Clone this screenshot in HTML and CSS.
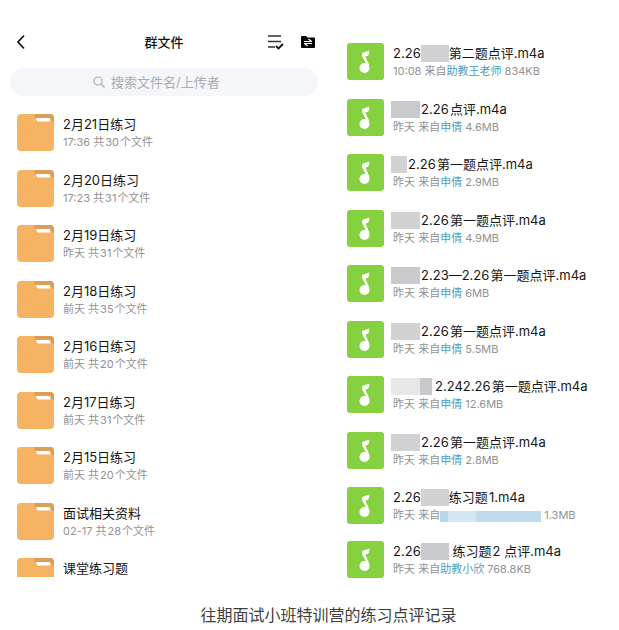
FILE: index.html
```html
<!DOCTYPE html>
<html lang="zh-CN">
<head>
    <meta charset="UTF-8">
    <meta name="viewport" content="width=device-width, initial-scale=1.0">
    <title>群文件</title>
    <link rel="stylesheet" href="styles.css">
</head>
<body>
    <svg class="symbols" aria-hidden="true">
        <symbol id="folder" viewBox="0 0 37 37">
            <rect width="37" height="37" rx="4" fill="#f6b363"/>
            <path d="M17 0H33a4 4 0 0 1 4 4V8L34 7H21Q19 6 18 4Z" fill="#dd9d55"/>
            <path d="M19 4H32Q33.500 4 33.500 5.500V7.500H21Q19.500 7.500 19 4Z" fill="#fff"/>
        </symbol>
        <symbol id="music" viewBox="0 0 37 37">
            <rect width="37" height="37" rx="3" fill="#86d140"/>
            <circle cx="17.500" cy="25" r="5" fill="#fff"/>
            <path d="M22.500 25C22.500 21 19.500 17 18.500 13.500C21 13 22.500 12.500 22.300 7.500C20 9 17 8.500 15.500 10C13.500 12.500 17.500 17 19.500 21.500Z" fill="#fff"/>
        </symbol>
    </svg>

    <main class="panels">
        <section class="panel">
            <header class="topbar">
                <button class="icon-btn" aria-label="返回">
                    <svg width="16" height="16" viewBox="0 0 16 16"><path d="M11 1.500L5 8l6 6.500" fill="none" stroke="#111" stroke-width="1.700"/></svg>
                </button>
                <h1>群文件</h1>
                <div class="actions">
                    <button class="icon-btn" aria-label="多选">
                        <svg width="17" height="16" viewBox="0 0 17 16"><path d="M1 2h13M1 7.500h13M1 13h7" fill="none" stroke="#333" stroke-width="1.500"/><path d="M9 12l2.500 2.500L16 10" fill="none" stroke="#111" stroke-width="1.800"/></svg>
                    </button>
                    <button class="icon-btn" aria-label="传输列表">
                        <svg width="14" height="16" viewBox="0 0 14 16"><path d="M0 3q0-1 1-1h4l1.500 1.500H13q1 0 1 1V13q0 1-1 1H1q-1 0-1-1Z" fill="#050505"/><path d="M3 7.500h8M7.500 5l3 2.500M3 9.500h8M3.500 9.500l3 2.500" fill="none" stroke="#fff" stroke-width="1.200"/></svg>
                    </button>
                </div>
            </header>
            <label class="search">
                <svg width="12" height="12" viewBox="0 0 12 12"><circle cx="5" cy="5" r="4" fill="none" stroke="#a9adb2" stroke-width="1.200"/><path d="M8 8l3.500 3.500" stroke="#a9adb2" stroke-width="1.200"/></svg>
                <input type="search" placeholder="搜索文件名/上传者" aria-label="搜索">
            </label>
            <ul class="list">
                <li><svg class="icon"><use href="#folder"/></svg><div><h2>2月21日练习</h2><p>17:36 共&hairsp;30&hairsp;个文件</p></div></li>
                <li><svg class="icon"><use href="#folder"/></svg><div><h2>2月20日练习</h2><p>17:23 共&hairsp;31&hairsp;个文件</p></div></li>
                <li><svg class="icon"><use href="#folder"/></svg><div><h2>2月19日练习</h2><p>昨天 共&hairsp;31&hairsp;个文件</p></div></li>
                <li><svg class="icon"><use href="#folder"/></svg><div><h2>2月18日练习</h2><p>前天 共&hairsp;35&hairsp;个文件</p></div></li>
                <li><svg class="icon"><use href="#folder"/></svg><div><h2>2月16日练习</h2><p>前天 共&hairsp;20&hairsp;个文件</p></div></li>
                <li><svg class="icon"><use href="#folder"/></svg><div><h2>2月17日练习</h2><p>前天 共&hairsp;31&hairsp;个文件</p></div></li>
                <li><svg class="icon"><use href="#folder"/></svg><div><h2>2月15日练习</h2><p>前天 共&hairsp;20&hairsp;个文件</p></div></li>
                <li><svg class="icon"><use href="#folder"/></svg><div><h2>面试相关资料</h2><p>02-17 共&hairsp;28&hairsp;个文件</p></div></li>
                <li class="cut"><svg class="icon"><use href="#folder"/></svg><div><h2>课堂练习题</h2></div></li>
            </ul>
        </section>

        <section class="panel audio">
            <ul class="list">
                <li><svg class="icon"><use href="#music"/></svg><div><h2>2.26<i class="mask"></i>第二题点评.m4a</h2><p>10:08 来自<a href="#">助教王老师</a> 834KB</p></div></li>
                <li><svg class="icon"><use href="#music"/></svg><div><h2><i class="mask lead dark"></i>2.26&hairsp;点评.m4a</h2><p>昨天 来自<a href="#">申倩</a> 4.6MB</p></div></li>
                <li><svg class="icon"><use href="#music"/></svg><div><h2><i class="mask lead short"></i>2.26&hairsp;第一题点评.m4a</h2><p>昨天 来自<a href="#">申倩</a> 2.9MB</p></div></li>
                <li><svg class="icon"><use href="#music"/></svg><div><h2><i class="mask lead"></i>2.26&hairsp;第一题点评.m4a</h2><p>昨天 来自<a href="#">申倩</a> 4.9MB</p></div></li>
                <li><svg class="icon"><use href="#music"/></svg><div><h2><i class="mask lead dark"></i>2.23—2.26&hairsp;第一题点评.m4a</h2><p>昨天 来自<a href="#">申倩</a> 6MB</p></div></li>
                <li><svg class="icon"><use href="#music"/></svg><div><h2><i class="mask lead"></i>2.26&hairsp;第一题点评.m4a</h2><p>昨天 来自<a href="#">申倩</a> 5.5MB</p></div></li>
                <li><svg class="icon"><use href="#music"/></svg><div><h2><i class="mask lead wide"></i>2.242.26&hairsp;第一题点评.m4a</h2><p>昨天 来自<a href="#">申倩</a> 12.6MB</p></div></li>
                <li><svg class="icon"><use href="#music"/></svg><div><h2><i class="mask lead"></i>2.26&hairsp;第一题点评.m4a</h2><p>昨天 来自<a href="#">申倩</a> 2.8MB</p></div></li>
                <li class="tight"><svg class="icon"><use href="#music"/></svg><div><h2>2.26<i class="mask"></i>练习题&hairsp;1.m4a</h2><p>昨天 来自<i class="mask-name"></i> 1.3MB</p></div></li>
                <li><svg class="icon"><use href="#music"/></svg><div><h2>2.26<i class="mask dark"></i> 练习题&hairsp;2 点评.m4a</h2><p>昨天 来自<a href="#">助教小欣</a> 768.8KB</p></div></li>
            </ul>
        </section>
    </main>
    <p class="caption">往期面试小班特训营的练习点评记录</p>
</body>
</html>
```

FILE: styles.css
```css
* {
    box-sizing: border-box;
}
body {
    margin: 0;
    background: #fff;
    color: #161616;
    font-family: Inter, "Noto Sans CJK SC", sans-serif;
}
h1, h2, p, ul {
    margin: 0;
    padding: 0;
}
.symbols {
    display: none;
}
.panels {
    display: grid;
    grid-template-columns: 53fr 47fr;
}
.panel {
    padding: 29px 10px 0;
}
.audio {
    padding: 43px 0 0 19px;
}

/* top bar and search */
.topbar {
    display: grid;
    grid-template-columns: 1fr auto 1fr;
    align-items: center;
    height: 26px;
    padding: 0 3px;
}
.topbar h1 {
    font-size: 13px;
    font-weight: 500;
    line-height: 18px;
}
.icon-btn {
    justify-self: start;
    display: flex;
    padding: 0;
    border: 0;
    background: none;
}
.actions {
    justify-self: end;
    display: flex;
    gap: 17px;
}
.search {
    display: flex;
    align-items: center;
    justify-content: center;
    gap: 6px;
    height: 28px;
    margin: 13px 0 18px;
    border-radius: 14px;
    background: #f4f6f9;
}
.search input {
    width: 124px;
    padding: 0;
    border: 0;
    outline: 0;
    background: none;
    font-family: inherit;
    font-size: 13px;
}
.search input::placeholder {
    color: #a9adb2;
}

/* file rows */
.list {
    list-style: none;
}
.list li {
    display: flex;
    gap: 9px;
    height: 37px;
    margin-bottom: 18px;
    padding-left: 7px;
    white-space: nowrap;
}
.list li:nth-child(odd) {
    margin-bottom: 19px;
}
.audio .list li {
    padding-left: 0;
}
.list li.tight {
    margin-bottom: 17px;
}
.list li:last-child {
    margin-bottom: 0;
}
.list .cut {
    height: 19px;
    overflow: hidden;
}
.icon {
    flex: none;
    width: 37px;
    height: 37px;
}
.list h2 {
    display: flex;
    align-items: center;
    height: 20px;
    font-size: 13px;
    font-weight: 400;
    line-height: 20px;
    white-space: pre;
}
.list p {
    height: 17px;
    color: #929292;
    font-size: 11px;
    line-height: 17px;
}
.list a {
    color: #4c9dbf;
    text-decoration: none;
}

/* blocked-out names */
.mask {
    width: 28px;
    height: 17px;
    background: #d2d2d5;
}
.lead {
    margin: 0 1px 0 -2px;
    width: 29px;
}
.short {
    width: 16px;
}
.wide {
    width: 41px;
    margin-right: 3px;
    background: linear-gradient(to right, #e8e8e8 70%, #c8c9cc 70%);
}
.dark {
    background: #c8cacd;
}
.mask-name {
    display: inline-block;
    width: 101px;
    height: 11px;
    vertical-align: middle;
    background: linear-gradient(to right, #b9d7ea 8%, #d3e6f4 8% 36%, #c0dbed 36%);
}

.caption {
    margin-top: 25px;
    color: #3e3e3e;
    font-size: 16px;
    line-height: 24px;
    text-align: center;
    padding-left: 38px;
}
```
